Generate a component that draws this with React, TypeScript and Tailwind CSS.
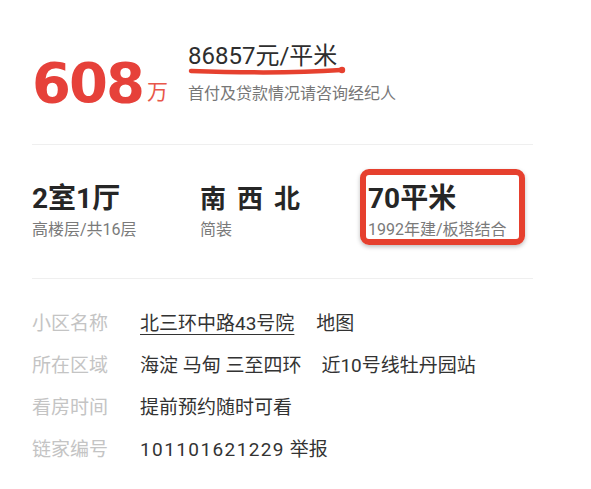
const info = [
  { label: '小区名称', value: 'link' },
  { label: '所在区域', value: 'area' },
  { label: '看房时间', value: '提前预约随时可看' },
  { label: '链家编号', value: 'id' },
]

function Info({ value }: { value: string }) {
  if (value === 'link') {
    return (
      <span className="flex">
        <span className="underline decoration-1 underline-offset-[4px]">北三环中路43号院</span>
        <span className="ml-[22px]">地图</span>
      </span>
    )
  }
  if (value === 'area') {
    return (
      <span className="flex">
        <span>海淀 马甸 三至四环</span>
        <span className="ml-[20px]">近10号线牡丹园站</span>
      </span>
    )
  }
  if (value === 'id') {
    return (
      <span>
        <span className="tracking-[1.4px]">101101621229</span> 举报
      </span>
    )
  }
  return <span>{value}</span>
}

export default function App() {
  return (
    <div className="w-[591px] h-[489px] bg-white pl-[32px] font-[Roboto,'Noto_Sans_CJK_SC',sans-serif] text-[#333]">
      <div className="w-[501px]">
        {/* price */}
        <section className="h-[145px] border-b border-[#efefef] flex items-start">
          <div className="w-[156px] pt-[55px] flex items-end">
            <span className="font-['DejaVu_Sans'] font-bold text-[56px] leading-[56px] tracking-[-2px] text-[#e6413a]">
              608
            </span>
            <span className="ml-[4px] mb-[8px] text-[21px] leading-[21px] text-[#e8574a]">万</span>
          </div>
          <div className="pt-[41px]">
            <div className="relative text-[24px] leading-[30px] text-[#2e2e2e]">
              86857元/平米
              <svg
                className="absolute left-0 top-[24px]"
                width="162"
                height="12"
                viewBox="0 0 162 12"
                fill="none"
              >
                <path
                  d="M3 6 C 45 7.5, 110 8, 153 5"
                  stroke="#e6412f"
                  strokeWidth="4.5"
                  strokeLinecap="round"
                />
                <circle cx="154" cy="5" r="3.2" fill="#e6412f" />
              </svg>
            </div>
            <div className="mt-[13px] text-[16px] leading-[20px] text-[#777]">首付及贷款情况请咨询经纪人</div>
          </div>
        </section>

        {/* basic */}
        <section className="relative h-[134px] border-b border-[#efefef] grid grid-cols-[168px_168px_165px] pt-[40px]">
          <div>
            <div className="text-[28px] leading-[28px] font-bold text-[#262626]">2室1厅</div>
            <div className="mt-[7px] text-[16px] leading-[20px] text-[#7a7a7a]">高楼层/共16层</div>
          </div>
          <div>
            <div className="flex gap-[11px] text-[26px] leading-[28px] font-bold text-[#262626]">
              <span>南</span>
              <span>西</span>
              <span>北</span>
            </div>
            <div className="mt-[7px] text-[16px] leading-[20px] text-[#7a7a7a]">简装</div>
          </div>
          <div>
            <div className="text-[28px] leading-[28px] font-bold text-[#262626]">70平米</div>
            <div className="mt-[7px] text-[16px] leading-[20px] text-[#7a7a7a]">1992年建/板塔结合</div>
          </div>
          <div className="absolute left-[328px] top-[24px] w-[165px] h-[76px] border-[6px] border-[#e6402e] rounded-[9px] shadow-[0_2px_4px_rgba(0,0,0,0.25)]" />
        </section>

        {/* details */}
        <section className="pt-[24px]">
          {info.map((row) => (
            <div key={row.label} className="flex h-[42px] items-center text-[19px] leading-[24px]">
              <span className="w-[108px] text-[#c4c4c4]">{row.label}</span>
              <Info value={row.value} />
            </div>
          ))}
        </section>
      </div>
    </div>
  )
}
